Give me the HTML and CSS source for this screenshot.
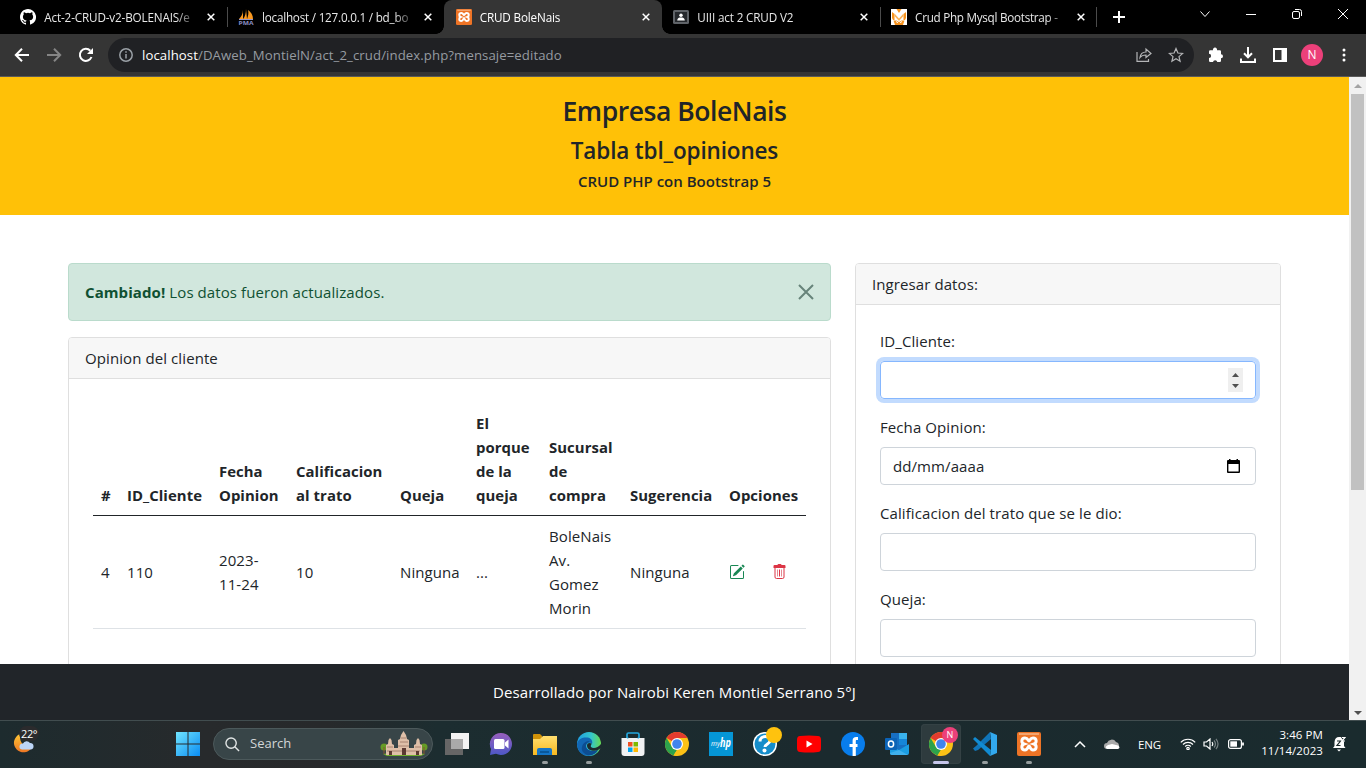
FILE: index.html
```html
<!DOCTYPE html>
<html lang="es">
<head>
<meta charset="utf-8">
<title>CRUD BoleNais</title>
<link rel="stylesheet" href="styles.css">
</head>
<body>
<div class="screen">
  <header class="tabs">
    <div class="tab">
      <svg class="fav" viewBox="0 0 16 16"><path fill="#fff" d="M8 0C3.58 0 0 3.58 0 8c0 3.54 2.29 6.53 5.47 7.59.4.07.55-.17.55-.38v-1.49c-2.01.37-2.53-.49-2.69-.94-.09-.23-.48-.94-.82-1.13-.28-.15-.68-.52-.01-.53.63-.01 1.08.58 1.23.82.72 1.21 1.87.87 2.33.66.07-.52.28-.87.51-1.07-1.78-.2-3.64-.89-3.64-3.95 0-.87.31-1.59.82-2.15-.08-.2-.36-1.02.08-2.12 0 0 .67-.21 2.2.82a7.4 7.4 0 0 1 4 0c1.53-1.04 2.2-.82 2.2-.82.44 1.1.16 1.92.08 2.12.51.56.82 1.27.82 2.15 0 3.07-1.87 3.75-3.65 3.95.29.25.54.73.54 1.48v2.2c0 .21.15.46.55.38A8 8 0 0 0 8 0z"/></svg>
      <span class="title t1">Act-2-CRUD-v2-BOLENAIS/e</span><svg class="x" viewBox="0 0 8 8"><path d="M.7.7l6.6 6.6M7.3.7L.7 7.3"/></svg>
    </div>
    <div class="tab sep">
      <svg class="fav" viewBox="0 0 16 16"><path fill="#f89820" d="M5 1C5 5 3 8 1 10h4zM8 0c0 4-1 8-3 10h4zM10 1c3 2 5 5 5 9H9c1-3 2-6 1-9z"/><path d="M1 10.500h14" stroke="#9999cc"/><text x="0.500" y="15.500" font-size="6" textLength="15" lengthAdjust="spacingAndGlyphs" fill="#8b8fc4" font-weight="bold">PMA</text></svg>
      <span class="title t2">localhost / 127.0.0.1 / bd_bo</span><svg class="x" viewBox="0 0 8 8"><path d="M.7.7l6.6 6.6M7.3.7L.7 7.3"/></svg>
    </div>
    <div class="tab active">
      <svg class="fav" viewBox="0 0 24 24"><use href="#xampp"/></svg>
      <span class="title t3">CRUD BoleNais</span><svg class="x" viewBox="0 0 8 8"><path d="M.7.7l6.6 6.6M7.3.7L.7 7.3"/></svg>
    </div>
    <div class="tab">
      <svg class="fav" viewBox="0 0 16 16"><rect y="1" width="16" height="14" rx="1.5" fill="#5f6368"/><rect x="2" y="3" width="12" height="10" fill="#25282c"/><circle cx="8" cy="6.3" r="1.7" fill="#fff"/><path d="M4.2 11.500c0-2.500 2-3 3.800-3s3.800.5 3.800 3z" fill="#fff"/></svg>
      <span class="title t4">UIII act 2 CRUD V2</span><svg class="x" viewBox="0 0 8 8"><path d="M.7.7l6.6 6.6M7.3.7L.7 7.3"/></svg>
    </div>
    <div class="tab sep endsep">
      <svg class="fav" viewBox="0 0 16 16"><rect width="16" height="16" fill="#fff"/><path d="M1 3l2.500 2v6H2L1 9zM15 3l-2.500 2v6H14l1-2zM5.500 0h5L8 4z" fill="#f7931e"/><path d="M2.500 11.500h3L8 13l2.500-1.500h3L12 16H4z" fill="#f7931e"/><path d="M5 12.500l2 1.200M11 12.500l-2 1.200" stroke="#fff"/><path d="M3.500 4.500L8 9.500l4.500-5V7L8 12 3.500 7z" fill="#fbb45a"/></svg>
      <span class="title t5">Crud Php Mysql Bootstrap -</span><svg class="x" viewBox="0 0 8 8"><path d="M.7.7l6.6 6.6M7.3.7L.7 7.3"/></svg>
    </div>
    <svg class="plus" viewBox="0 0 12 12"><path d="M6 0v12M0 6h12" stroke="#fff" stroke-width="2"/></svg>
    <div class="winctl">
      <svg viewBox="0 0 12 12"><path d="M1.500 3.500L6 8.500l4.500-5"/></svg>
      <svg viewBox="0 0 12 12"><path d="M1 6.500h10"/></svg>
      <svg viewBox="0 0 12 12"><rect x="1.500" y="3.500" width="7" height="7" rx="1.500"/><path d="M4 1.500h4.500q2 0 2 2V8"/></svg>
      <svg viewBox="0 0 12 12"><path d="M1 1l10 10M11 1L1 11"/></svg>
    </div>
  </header>

  <nav class="toolbar">
    <svg class="ic back" viewBox="0 0 16 16"><path d="M15 8H2M8 1.800L1.800 8 8 14.200"/></svg>
    <svg class="ic fwd" viewBox="0 0 16 16"><path d="M1 8h13M8 1.800L14.200 8 8 14.200"/></svg>
    <svg class="ic reload" viewBox="0 0 16 16"><path d="M13.500 10A6 6 0 1 1 12.300 3.800"/><path d="M15 1v6H9z" fill="#fff" stroke="none"/></svg>
    <div class="omni">
      <svg class="info" viewBox="0 0 14 14"><circle cx="7" cy="7" r="6.200"/><path d="M7 6v4.500M7 3.300v1.500"/></svg>
      <span class="url"><b>localhost</b>/DAweb_MontielN/act_2_crud/index.php?mensaje=editado</span>
      <svg class="share" viewBox="0 0 16 16"><path d="M1 5v9.300h11.500V12M4 10.500c.5-4 3-5.500 6-5.500V2l5 4.500-5 4V8c-3 0-4.500.5-6 2.500z"/></svg>
      <svg class="star" viewBox="0 0 16 16"><path d="M8 1.500l1.900 4.500 4.800.4-3.700 3.200 1.100 4.700L8 11.800l-4.100 2.500L5 9.600 1.300 6.400 6.100 6z"/></svg>
    </div>
    <svg class="tool" viewBox="0 0 16 16"><path fill="#fff" d="M1 4.500q0-1.200 1.200-1.200H5a2.100 2.100 0 1 1 4 0h2.800q1.200 0 1.200 1.200v2.800a2 2 0 1 1 0 4v2.500q0 1.200-1.200 1.200H9.300a2.200 2.200 0 0 0-4.300 0H2.200Q1 15 1 13.800V11a2.100 2.100 0 0 0 0-4.200z"/></svg>
    <svg class="tool" viewBox="0 0 16 16"><path fill="none" stroke="#fff" stroke-width="2" d="M8 0v10M4 6.300l4 4 4-4M1 11.500V15h14v-3.500"/></svg>
    <svg class="tool" viewBox="0 0 16 16"><path fill="#fff" fill-rule="evenodd" d="M1 1h14v14H1zM3 3v10h6.500V3z"/></svg>
    <span class="avatar">N</span>
    <svg class="dots" viewBox="0 0 4 14"><circle cx="2" cy="2" r="1.500"/><circle cx="2" cy="7" r="1.500"/><circle cx="2" cy="12" r="1.500"/></svg>
  </nav>

  <div class="viewport">
    <div class="page">
      <div class="hero"><h1>Empresa BoleNais</h1><h2>Tabla tbl_opiniones</h2><h3>CRUD PHP con Bootstrap 5</h3></div>
      <main class="container">
        <section class="left">
          <div class="alert"><p><strong>Cambiado!</strong> Los datos fueron actualizados.</p><svg viewBox="0 0 16 16"><path d="M1 1l14 14M15 1L1 15"/></svg></div>
          <div class="card">
            <div class="card-head">Opinion del cliente</div>
            <table>
              <colgroup><col class="c1"><col class="c2"><col class="c3"><col class="c4"><col class="c5"><col class="c6"><col class="c7"><col class="c8"><col class="c9"><col class="c10"></colgroup>
              <thead><tr><th>#</th><th>ID_Cliente</th><th>Fecha<br>Opinion</th><th>Calificacion<br>al trato</th><th>Queja</th><th>El<br>porque<br>de la<br>queja</th><th>Sucursal<br>de<br>compra</th><th>Sugerencia</th><th colspan="2">Opciones</th></tr></thead>
              <tbody><tr><td>4</td><td>110</td><td>2023-<br>11-24</td><td>10</td><td>Ninguna</td><td>...</td><td>BoleNais<br>Av.<br>Gomez<br>Morin</td><td>Ninguna</td>
              <td><svg class="bi" viewBox="0 0 16 16" fill="#198754"><path d="M15.502 1.940a.5.5 0 0 1 0 .706L14.459 3.690l-2-2L13.502.646a.5.5 0 0 1 .707 0l1.293 1.293zm-1.750 2.456-2-2L4.939 9.210a.5.5 0 0 0-.121.196l-.805 2.414a.25.25 0 0 0 .316.316l2.414-.805a.5.5 0 0 0 .196-.12l6.813-6.814z"/><path fill-rule="evenodd" d="M1 13.500A1.500 1.500 0 0 0 2.500 15h11a1.500 1.500 0 0 0 1.500-1.500v-6a.5.5 0 0 0-1 0v6a.5.5 0 0 1-.5.5h-11a.5.5 0 0 1-.5-.5v-11a.5.5 0 0 1 .5-.5H9a.5.5 0 0 0 0-1H2.500A1.500 1.500 0 0 0 1 2.500z"/></svg></td>
              <td><svg class="bi trash" viewBox="0 0 16 16"><path fill="#dc3545" d="M1.500 2q0-1 1-1H5.500q0-1 1-1h2q1 0 1 1h3q1 0 1 1v2h-12z"/><path fill="none" stroke="#dc3545" d="M3 4v9q0 1.500 1.500 1.500h6q1.500 0 1.500-1.500V4"/><path stroke="#e58a93" d="M5.500 5.500v7M9.500 5.500v7"/><path stroke="#dc3545" d="M7.500 5.500v7"/></svg></td></tr></tbody>
            </table>
          </div>
        </section>
        <section class="right">
          <div class="card">
            <div class="card-head">Ingresar datos:</div>
            <form class="form">
              <label>ID_Cliente:</label>
              <div class="input focus"><span class="spin"><svg viewBox="0 0 15 24"><path d="M4 9l3.500-4L11 9zM4 16l3.500 4L11 16z" fill="#505050"/></svg></span></div>
              <label>Fecha Opinion:</label>
              <div class="input"><span class="date">dd/mm/aaaa</span><svg class="cal" viewBox="0 0 13 14"><path fill-rule="evenodd" d="M0 2q0-1 1-1h1V0h1.500v1h6V0H11v1h1q1 0 1 1v11q0 1-1 1H1q-1 0-1-1zM1.400 5v7.600h10.200V5z"/></svg></div>
              <label>Calificacion del trato que se le dio:</label>
              <div class="input"></div>
              <label>Queja:</label>
              <div class="input"></div>
            </form>
          </div>
        </section>
      </main>
      <footer class="credit"><span>Desarrollado por Nairobi Keren Montiel Serrano 5°J</span></footer>
    </div>
    <div class="scroll"><i class="up"></i><i class="thumb"></i><i class="down"></i></div>
  </div>

  <div class="taskbar">
    <div class="weather"><svg viewBox="0 0 24 24"><path d="M9 2a9.500 9.500 0 1 0 12 13C13 17 8 10 9 2z" fill="url(#moon)"/><path d="M11 17.500a3 3 0 0 1 1-6 4 4 0 0 1 7-.5 3.300 3.300 0 0 1 1 6.500z" fill="#bcd5f7"/></svg><span class="temp">22°</span></div>
    <svg class="win" viewBox="0 0 24 24"><path d="M0 0h11.500v11.500H0zM12.500 0H24v11.500H12.500zM0 12.500h11.500V24H0zM12.500 12.500H24V24H12.500z" fill="url(#wing)"/></svg>
    <div class="search"><svg class="glass" viewBox="0 0 16 16"><circle cx="6.500" cy="6.500" r="5.500"/><path d="M10.500 10.500l4.500 4.500"/></svg><span>Search</span>
      <svg class="temple" viewBox="0 0 48 26"><path d="M3 23q21-4 42 0l-4 2H7z" fill="#6fae2d"/><circle cx="4" cy="16" r="3.500" fill="#659b25"/><circle cx="44" cy="16" r="3.500" fill="#659b25"/><path d="M4 16v7M44 16v7" stroke="#86552f"/><path d="M6 24V14l2-1 .5-4L10 7l1.500 2 .5 4 2 1v3h4V9l2-1 1-4 2.500-4L26 4l1 4 2 1v8h5v-3l2-1 .5-4L38 7l1.500 2 .5 4 2 1v10z" fill="#dfbfa8"/><path d="M7 16h6M18 15h11M35 16h6M20 11h8M21 7h5M7 20h33" stroke="#a88270"/><path d="M9 24v-4h3v4M22 24v-7h4v7M36 24v-4h3v4" fill="#5c3932"/></svg></div>
    <div class="apps">
      <div class="app"><svg viewBox="0 0 24 24"><rect x="6" y="1" width="18" height="16" fill="#f3f3f3"/><rect y="7" width="18" height="16" fill="#666"/><rect x="6" y="7" width="12" height="10" fill="#aaa"/></svg></div>
      <div class="app"><svg viewBox="0 0 24 24"><path d="M12 1a11 11 0 1 1-5 20.800L1 23l1-6A11 11 0 0 1 12 1z" fill="url(#teams)"/><rect x="5" y="7" width="10.500" height="10" rx="1.500" fill="#fff"/><path d="M16 10.500l3.500-3v9L16 13.500z" fill="#fff"/></svg></div>
      <div class="app run"><svg viewBox="0 0 24 24"><path d="M0 3q0-1 1-1h6l2 2v5H0z" fill="#cf9208"/><path d="M0 7h7l3-3h14v19H0z" fill="url(#fold)"/><path d="M4 23v-5q0-2 2-2h11q2 0 2 2v5z" fill="#1475c5"/><path d="M7 20h9" stroke="#064f8b" stroke-width="1.500"/></svg></div>
      <div class="app run"><svg viewBox="0 0 24 24"><circle cx="12" cy="12" r="12" fill="url(#edge)"/><path d="M0 12C1 7 5 5.500 9 5.500c5 0 7 3 6 6.500-1-2-6-2-6 2 0 5 7 6 12 4-3 6-11 7-16 4-3-2-5-6-5-10z" fill="#1267b4"/><path d="M5 15C6 10 10 9 13 9c-3 1-4 3-4 5 0 5 7 6 12 4-2 4-7 6-11 5-4-2-6-5-5-8z" fill="#0d4d91"/><path d="M14.500 11.500c.5 1-1.500 2-.5 3.500 2 2 7 1 10-3v4l-3 2c-5 2-11 0-11-4.500 0-3 3-3 4.500-2z" fill="#1d2b2e"/></svg></div>
      <div class="app"><svg viewBox="0 0 24 24"><path d="M6 8V2.500Q6 1 7.500 1h9Q18 1 18 2.500V8" fill="none" stroke="#24a8df" stroke-width="1.700"/><path d="M.5 6h23v15q0 3-3 3h-17q-3 0-3-3z" fill="#f1f2f3"/><path d="M6 6h12" stroke="#24a8df" stroke-width="1.200" stroke-dasharray="1.500 9"/><path fill="#f25022" d="M7 10h4.500v4.500H7z"/><path fill="#7fba00" d="M12.500 10H17v4.500h-4.500z"/><path fill="#00a4ef" d="M7 15.500h4.500V20H7z"/><path fill="#ffb900" d="M12.500 15.500H17V20h-4.500z"/></svg></div>
      <div class="app"><svg viewBox="0 0 24 24"><use href="#chrome"/></svg></div>
      <div class="app"><svg viewBox="0 0 24 24"><rect width="24" height="24" fill="#0596d6"/><text x="2" y="14" font-size="8" textLength="9" lengthAdjust="spacingAndGlyphs" fill="#fff" font-style="italic">my</text><text x="11" y="15" font-size="12" textLength="11" lengthAdjust="spacingAndGlyphs" font-weight="bold" fill="#fff" font-style="italic">hp</text></svg></div>
      <div class="app"><svg class="wide" viewBox="0 0 30 30"><circle cx="12" cy="18" r="12" fill="#fff"/><circle cx="12" cy="18" r="10.500" fill="#168dca"/><path d="M7 15.500c0-7 11-6 10-.5-.5 3-5 3-5 6" fill="none" stroke="#fff" stroke-width="3"/><circle cx="11.500" cy="24.500" r="2" fill="#fff"/><circle cx="21" cy="9" r="8" fill="#ffc20e"/></svg></div>
      <div class="app"><svg viewBox="0 0 24 24"><path d="M3 4q9-1 18 0 3 0 3 4v8q0 4-3 4-9 1-18 0-3 0-3-4V8q0-4 3-4z" fill="#f00"/><path d="M9.500 8.500v7l6-3.500z" fill="#fff"/></svg></div>
      <div class="app"><svg viewBox="0 0 24 24"><circle cx="12" cy="12" r="12" fill="#087dec"/><path d="M17 6.500h-1.800q-2 0-2 2V24M8.500 13.500h8" fill="none" stroke="#fff" stroke-width="3.200"/></svg></div>
      <div class="app"><svg viewBox="0 0 24 24"><path d="M6 1h16v17H6z" fill="#176fc2"/><path d="M14 1h8v6h-8z" fill="#39b2ec"/><path d="M14 7h8v6h-8z" fill="#1686d9"/><path d="M5 13l9 5 10-6v9q0 2-2 2H7q-2 0-2-2z" fill="#1b9de2"/><path d="M14 18l9 5H7q-2 0-2-2z" fill="#3fb0ec"/><rect y="6" width="12" height="12" rx="1" fill="#0b63b7"/><ellipse cx="6" cy="12" rx="2.600" ry="3" fill="none" stroke="#fff" stroke-width="1.500"/></svg></div>
      <div class="app current"><svg viewBox="0 0 24 24"><use href="#chrome"/></svg><span class="badge">N</span></div>
      <div class="app run"><svg viewBox="0 0 24 24"><path d="M17 0l-7 7L3 14 0 16.500l2 2.500 3-1 13-11z" fill="#1075b8"/><path d="M2 5L0 7l3 3 14 14 1-6z" fill="#118bd2"/><path d="M17 0l7 3v18l-7 3 1-5V5z" fill="#32a8ed"/></svg></div>
      <div class="app run"><svg viewBox="0 0 24 24"><use href="#xampp"/></svg></div>
    </div>
    <div class="tray">
      <svg class="chev" viewBox="0 0 12 8"><path d="M1 7l5-5 5 5" fill="none" stroke="#fff" stroke-width="1.500"/></svg>
      <svg class="cloud" viewBox="0 0 16 12"><path d="M3 11a3 3 0 0 1 0-6 5 5 0 0 1 9-1 3.700 3.700 0 0 1 1 7z" fill="#aaa"/><path d="M3 11q-3-2 1-4l4-1 6 1.500q3 2 0 3.500z" fill="#fff"/></svg>
      <span class="eng">ENG</span>
      <svg class="wifi" viewBox="0 0 16 12"><path d="M.8 4.300a10 10 0 0 1 14.400 0M3 6.500a7 7 0 0 1 10 0M5.200 8.500a4 4 0 0 1 5.600 0"/><circle cx="8" cy="10.500" r="1.200"/></svg>
      <svg class="vol" viewBox="0 0 16 12"><path d="M1 4h2.500L7 1v10L3.500 8H1zM9 4q1.500 2 0 4"/><path d="M11 2.500q3 3.500 0 7M13 .8q4 5.200 0 10.400" opacity=".4"/></svg>
      <svg class="bat" viewBox="0 0 16 10"><rect x=".6" y=".6" width="12.800" height="8.800" rx="2"/><rect x="2.300" y="2.300" width="6.700" height="5.400" fill="#fff" stroke="none"/><path d="M15 3.500v3" stroke-width="1.800"/></svg>
      <div class="clock"><span>3:46 PM</span><span>11/14/2023</span></div>
      <svg class="bell" viewBox="0 0 14 16"><path d="M1 12l1.500-2V6Q3 1 7 1h2l3 5v4l1.500 2zM5 13.500h4L7 15.500z" fill="#fff"/><path d="M5 5h3.500l-3.500 4.500h3.500" stroke="#1b292b" fill="none"/><path d="M10 1.500h3l-3 3.500h3" stroke="#fff" fill="none"/></svg>
    </div>
  </div>
</div>

<svg class="defs" width="0" height="0">
  <defs>
    <linearGradient id="moon" x2="0" y2="1"><stop stop-color="#ffc635"/><stop offset="1" stop-color="#ed7624"/></linearGradient>
    <linearGradient id="wing" x2="1" y2="1"><stop stop-color="#70e4ff"/><stop offset="1" stop-color="#0a8cf2"/></linearGradient>
    <linearGradient id="teams" x2="0" y2="1"><stop stop-color="#975fbd"/><stop offset="1" stop-color="#4d58c7"/></linearGradient>
    <linearGradient id="fold" x2="0" y2="1"><stop stop-color="#ffdf70"/><stop offset="1" stop-color="#f7b91f"/></linearGradient>
    <linearGradient id="edge" x2="1"><stop stop-color="#1e9ee3"/><stop offset=".6" stop-color="#35c6ca"/><stop offset="1" stop-color="#65d952"/></linearGradient>
    <symbol id="xampp" viewBox="0 0 24 24"><rect width="24" height="24" rx="2" fill="#ee7426"/><path d="M2 1h20v2H2z" fill="#f5a56e"/><path d="M8 6c-4 0-4 5-1 6-3 1-3 6 1 6 3 0 3-4 4-4s1 4 4 4c4 0 4-5 1-6 3-1 3-6-1-6-3 0-3 3-4 3S11 6 8 6z" fill="none" stroke="#fff" stroke-width="3"/></symbol>
    <symbol id="chrome" viewBox="0 0 24 24"><circle cx="12" cy="12" r="12" fill="#fbc116"/><path d="M12 12L1.600 6A12 12 0 0 1 22.400 6H12z" fill="#e33b2e"/><path d="M1.600 6L7 15l5 3-3.500 5.500A12 12 0 0 1 1.600 6z" fill="#2da24c"/><path d="M12 18l5.200-3L12 24a12 12 0 0 1-3.500-.5z" fill="#fbc116"/><circle cx="12" cy="12" r="6" fill="#fff"/><circle cx="12" cy="12" r="4.800" fill="#4084ed"/></symbol>
  </defs>
</svg>
</body>
</html>
```
FILE: styles.css
```css
* { box-sizing: border-box; }
body { margin: 0; overflow: hidden; font-family: "Open Sans", "Noto Sans", sans-serif; color: #212529; }
svg { display: block; flex: none; }
.screen { width: 1366px; height: 768px; display: flex; flex-direction: column; }
.defs { position: absolute; }

.tabs { height: 34px; background: #000; display: flex; padding-left: 9px; color: #e8e8e8; flex: none; }
.tab { width: 217.700px; display: flex; align-items: center; padding: 0 12px 0 11.300px; position: relative; flex: none; }
.tab.active { background: #353535; border-radius: 8px 8px 0 0; color: #fff; }
.tab.active::before, .tab.active::after { content: ""; position: absolute; bottom: 0; width: 8px; height: 8px; }
.tab.active::before { left: -8px; background: radial-gradient(circle at 0 0, transparent 7.500px, #353535 8px); }
.tab.active::after { right: -8px; background: radial-gradient(circle at 100% 0, transparent 7.500px, #353535 8px); }
.tab.sep::before, .tab.endsep::after { content: ""; position: absolute; left: 0; top: 7px; width: 1px; height: 20px; background: #4b4b4b; }
.tab.endsep::after { left: auto; right: 0; }
.fav { width: 16px; height: 16px; }
.title { width: 155px; margin-left: 8px; font-size: 11.700px; white-space: nowrap; line-height: 20px; letter-spacing: -.15px; -webkit-mask-image: linear-gradient(90deg, #000 132px, transparent 154px); mask-image: linear-gradient(90deg, #000 132px, transparent 154px); }
.t2 { letter-spacing: -.22px; }
.t5 { letter-spacing: -.27px; }
.x { width: 8px; height: 8px; margin-left: 8px; stroke: #fff; stroke-width: 1.500; }
.plus { width: 12px; height: 12px; margin: 11px 0 0 15.500px; }
.winctl { margin-left: auto; display: flex; gap: 34px; padding: 8px 17px 0 0; }
.winctl svg { width: 12px; height: 12px; fill: none; stroke: #fff; }

.toolbar { height: 43px; background: #353535; border-bottom: 1px solid #5a5a5a; display: flex; align-items: center; padding: 0 20px 0 14px; flex: none; }
.ic { width: 16px; height: 16px; margin-right: 16px; fill: none; stroke: #fff; stroke-width: 2; }
.fwd { stroke: #858585; }
.reload { margin-right: 14px; }
.omni { width: 1086px; height: 34px; border-radius: 17px; background: #202124; display: flex; align-items: center; padding: 0 10px 0 11px; color: #9aa0a6; }
.info { width: 14px; height: 14px; fill: none; stroke: #9aa0a6; stroke-width: 1.500; }
.url { margin-left: 9px; font-size: 13.200px; flex: 1; white-space: nowrap; color: #969ba1; letter-spacing: .085px; }
.url b { font-weight: 400; color: #fff; }
.share, .star { width: 16px; height: 16px; fill: none; stroke: #b4b5b7; stroke-width: 1.200; margin-left: 16px; }
.tool { width: 16px; height: 16px; margin-left: 16px; }
.omni + .tool { margin-left: 14px; }
.avatar { width: 22px; height: 22px; margin-left: 13px; border-radius: 50%; background: #ec407a; color: #fff; font-size: 12px; line-height: 22px; text-align: center; }
.dots { width: 4px; height: 14px; margin-left: auto; fill: #fff; }

.viewport { height: 643px; display: flex; flex: none; background: #fff; }
.page { width: 1349px; height: 643px; overflow: hidden; position: relative; font-size: 15px; line-height: 24px; letter-spacing: .09px; }
.hero { height: 138px; background: #ffc107; padding-top: 17px; text-align: center; white-space: nowrap; }
h1, h2, h3 { margin: 0; font-weight: 600; }
h1 { font-size: 26.500px; line-height: 34px; margin-bottom: 8px; letter-spacing: -.45px; }
h2 { font-size: 22.500px; line-height: 29px; margin-bottom: 7px; letter-spacing: -.15px; }
h3 { font-size: 15px; line-height: 19px; letter-spacing: 0; }
.container { display: flex; gap: 24px; padding: 48px 68px 0; white-space: nowrap; }
.left { width: 763px; }
.right { width: 426px; }
.alert { height: 58px; border: 1px solid #badbcc; background: #d1e7dd; border-radius: 4px; color: #0f5132; display: flex; align-items: center; justify-content: space-between; padding: 0 16px; margin-bottom: 16px; }
.alert p { margin: 0; }
.alert svg { width: 16px; height: 16px; stroke: #67847a; stroke-width: 2; }
.card { border: 1px solid #dfdfdf; border-radius: 4px; height: 600px; }
.card-head { height: 41px; background: #f7f7f7; border-bottom: 1px solid #dfdfdf; padding: 8px 16px; border-radius: 3px 3px 0 0; }
table { table-layout: fixed; width: 713px; margin: 24px 0 0 24px; border-collapse: separate; border-spacing: 0; }
th, td { padding: 8px; text-align: left; }
th { vertical-align: bottom; border-bottom: 1px solid #212529; font-weight: 700; font-size: 14.900px; letter-spacing: .05px; }
td { vertical-align: middle; border-bottom: 1px solid #dee2e6; }
.c1 { width: 26px; } .c2 { width: 92px; } .c3 { width: 77px; } .c4 { width: 104px; } .c5 { width: 76px; }
.c6 { width: 73px; } .c7 { width: 81px; } .c8 { width: 99px; } .c9 { width: 43px; } .c10 { width: 42px; }
.bi { width: 16px; height: 16px; }
.form { padding: 24px; display: flex; flex-direction: column; }
.form label { height: 24px; margin-bottom: 8px; }
.input { height: 38px; margin-bottom: 16px; border: 1px solid #ced4da; border-radius: 4px; display: flex; align-items: center; justify-content: space-between; padding: 0 15px 0 12px; }
.input.focus { border-color: #86b7fe; box-shadow: 0 0 0 4px #c2dbfe; justify-content: flex-end; padding-right: 12px; }
.spin { width: 15px; height: 24px; background: #efefef; }
.cal { width: 13px; height: 14px; }
.credit { position: absolute; left: 0; right: 0; bottom: 0; height: 56px; background: #212529; color: #fff; display: flex; align-items: center; justify-content: center; white-space: nowrap; }
.scroll { width: 17px; background: #f1f1f1; display: flex; flex-direction: column; align-items: center; padding: 7px 0 5px; }
.scroll .up { border: 4px solid transparent; border-top: 0; border-bottom: 4px solid #a3a3a3; }
.scroll .thumb { width: 13px; height: 396px; margin-top: 6px; background: #c1c1c1; }
.scroll .down { margin-top: auto; border: 4px solid transparent; border-bottom: 0; border-top: 4px solid #505050; }

.taskbar { height: 48px; padding-bottom: 1px; border-top: 1px solid #414d4f; background: linear-gradient(90deg, #1d2b2e, #272a2c 15%, #27292b 24%, #1c2d30 32%, #1b2a2e 60%, #1a2b2e); display: flex; align-items: center; color: #fff; flex: none; }
.weather { position: relative; width: 176px; padding-left: 11px; }
.weather svg { width: 24px; height: 24px; }
.temp { position: absolute; left: 19px; top: -6px; padding: 0 2px; border-radius: 8px; background: #2b2b2d; font-size: 11px; line-height: 15px; letter-spacing: -.4px; }
.win { width: 24px; height: 24px; }
.search { width: 220px; height: 32px; margin-left: 13px; border: 1px solid #4c595b; border-radius: 16px; background: #384548; display: flex; align-items: center; padding: 0 4px 0 11px; color: #d3d6d7; font-size: 13px; }
.search span { margin: -2px 0 0 10px; }
.glass { width: 15px; height: 15px; fill: none; stroke: #e1e5e5; stroke-width: 1.500; }
.temple { width: 48px; height: 26px; margin-left: auto; }
.apps { display: flex; align-items: center; margin-left: 2px; }
.app { width: 44px; height: 40px; display: flex; align-items: center; justify-content: center; position: relative; padding-bottom: 1px; }
.app svg { width: 24px; height: 24px; }
.app .wide { width: 30px; height: 30px; margin: -6px -6px 0 0; }
.app.run::after, .app.current::after { content: ""; position: absolute; left: 19px; bottom: 0; width: 6px; height: 3px; border-radius: 2px; background: #969d9e; }
.app.current { width: 40px; margin: 0 2px; background: #2e3b3e; border-radius: 4px; box-shadow: inset 0 0 0 1px #344144; }
.app.current::after { left: 12px; width: 16px; background: #c6c6eb; }
.badge { position: absolute; left: 21px; top: 3px; width: 16px; height: 16px; border-radius: 50%; background: #ec407a; font-size: 9px; line-height: 16px; text-align: center; }
.tray { display: flex; align-items: center; margin-left: 23px; flex: 1; }
.tray svg { fill: none; stroke: #fff; stroke-width: 1.200; }
.chev { width: 12px; height: 8px; }
.tray .cloud { width: 16px; height: 12px; margin-left: 18px; stroke: none; }
.eng { width: 24px; margin-left: 18px; font-size: 11.500px; letter-spacing: -.1px; }
.wifi { width: 16px; height: 12px; margin-left: 18px; }
.vol { width: 16px; height: 12px; margin-left: 7px; }
.bat { width: 16px; height: 10px; margin-left: 9px; }
.clock { width: 79px; display: flex; flex-direction: column; margin-top: -2px; text-align: right; font-size: 11.500px; line-height: 16px; white-space: nowrap; letter-spacing: .08px; }
.tray .bell { width: 14px; height: 16px; margin-left: 9px; stroke: none; }
```
